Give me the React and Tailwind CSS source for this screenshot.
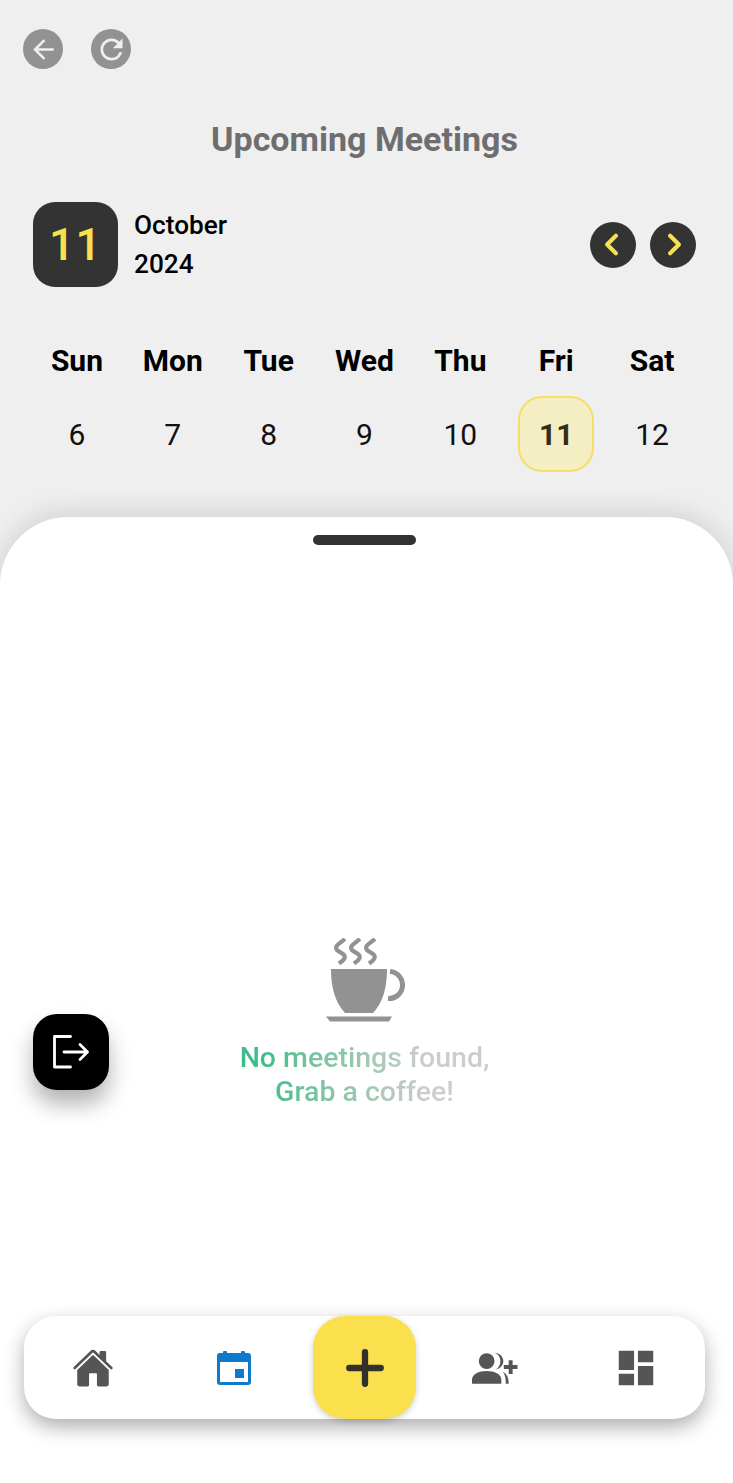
import { ChevronLeft, ChevronRight, Plus } from "lucide-react";
import { IoHome } from "react-icons/io5";
import { MdArrowBack, MdDashboard, MdRefresh } from "react-icons/md";

const days = [
    { name: "Sun", date: 6 },
    { name: "Mon", date: 7 },
    { name: "Tue", date: 8 },
    { name: "Wed", date: 9 },
    { name: "Thu", date: 10 },
    { name: "Fri", date: 11, active: true },
    { name: "Sat", date: 12 },
];

function CoffeeIcon() {
    return (
        <svg width="80" height="85" viewBox="0 0 80 85" fill="#929292">
            <path d="M6 31H62C62 50 58 64 48 75H20C10 64 6 50 6 31Z" />
            <path d="M65 33.5A13.5 13.5 0 0 1 63 60.5" fill="none" stroke="#929292" strokeWidth="5" />
            <path d="M1 78.5H67L64 83.6H5Z" />
            <g fill="none" stroke="#929292" strokeWidth="4.2">
                <path d="M20 1C14 6 9 8 12 12C15 15 22 16 19 21C18 23 16 24 14 25.500" />
                <path d="M35 1C29 6 24 8 27 12C30 15 37 16 34 21C33 23 31 24 29 25.500" />
                <path d="M50 1C44 6 39 8 42 12C45 15 52 16 49 21C48 23 46 24 44 25.500" />
            </g>
        </svg>
    );
}

function ExitIcon() {
    return (
        <svg width="40" height="36" viewBox="0 0 40 36" fill="none" stroke="white" strokeWidth="2.8" strokeLinecap="round" strokeLinejoin="round">
            <path d="M19.500 2.500H3.500V33H19.500" />
            <path d="M13 18H36.500M29 10.500L36.500 18L29 25.500" />
        </svg>
    );
}

function CalendarIcon() {
    return (
        <svg width="34" height="34" viewBox="0 0 34 34">
            <rect x="6" y="0" width="4" height="5" rx="1" fill="#0f7acb" />
            <rect x="24" y="0" width="4" height="5" rx="1" fill="#0f7acb" />
            <rect x="0" y="2" width="34" height="32" rx="3" fill="#0f7acb" />
            <rect x="3" y="11" width="28" height="20" fill="white" />
            <rect x="18" y="18" width="9" height="9" fill="#0f7acb" />
        </svg>
    );
}

function AddPersonIcon() {
    return (
        <svg width="47" height="34" viewBox="0 0 48 34" fill="#555555">
            <circle cx="16" cy="10" r="8" />
            <path d="M1 33V29C1 23 8 20 16 20C24 20 31 23 31 29V33Z" />
            <path d="M24 1.5C28 3 30 6 30 10C30 14 28 17 25 18.500C30 17.500 33 14 33 10C33 5.500 29 1.500 24 1.500Z" />
            <path d="M32 20.500C35 23 35.500 28 35.500 33H38.500C38.500 27 37 23 32 20.500Z" />
            <path d="M38.500 9H42.500V14H47.500V18H42.500V23H38.500V18H33.500V14H38.500Z" />
        </svg>
    );
}

export default function App() {
    return (
        <main className="min-h-screen bg-[#efefef] flex flex-col font-['Roboto',sans-serif] overflow-hidden">
            <section className="pt-[29px] pr-[4px]">
                <div className="flex gap-[28px] pl-[23px]">
                    <button className="w-10 h-10 rounded-full bg-[#929292] flex items-center justify-center text-[#efefef]">
                        <MdArrowBack size={31} />
                    </button>
                    <button className="w-10 h-10 rounded-full bg-[#929292] flex items-center justify-center text-[#efefef]">
                        <MdRefresh size={33} />
                    </button>
                </div>

                <h1 className="mt-[50px] text-center text-[34px] leading-10 font-bold text-[#6e6e6e]">
                    Upcoming Meetings
                </h1>

                <div className="mt-[43px] pl-[33px] pr-[33px] flex items-center">
                    <div className="w-[85px] h-[85px] pt-[1px] rounded-[22px] bg-[#333333] text-[#fae04c] text-[45px] font-medium flex items-center justify-center tracking-[1px]">
                        11
                    </div>
                    <div className="ml-4 text-[26.2px] font-medium leading-[39px] text-black">
                        <p>October</p>
                        <p>2024</p>
                    </div>
                    <div className="ml-auto flex gap-[14px]">
                        <button className="w-[46px] h-[46px] rounded-full bg-[#333333] flex items-center justify-center text-[#f6e054]">
                            <ChevronLeft size={35} strokeWidth={2.8} className="-ml-[3px]" />
                        </button>
                        <button className="w-[46px] h-[46px] rounded-full bg-[#333333] flex items-center justify-center text-[#f6e054]">
                            <ChevronRight size={35} strokeWidth={2.8} className="ml-[3px]" />
                        </button>
                    </div>
                </div>

                <div className="mt-[51px] mx-[29px] grid grid-cols-7">
                    {days.map((day) => (
                        <div key={day.name} className="flex flex-col items-center">
                            <p className="text-[30px] leading-[46px] font-bold text-black">{day.name}</p>
                            <div
                                className={`mt-[12px] w-[76px] h-[76px] flex items-center justify-center text-[30px] ${day.active
                                    ? "rounded-[24px] border-2 border-[#f5df68] bg-[#f4efc3] font-bold text-[#352d1c]"
                                    : "text-[#111111]"
                                    }`}
                            >
                                {day.date}
                            </div>
                        </div>
                    ))}
                </div>
            </section>

            <section className="relative mt-[45px] flex-1 flex flex-col bg-white rounded-t-[68px] shadow-[0_-4px_28px_rgba(0,0,0,0.13)]">
                <div className="mt-[18px] ml-[313px] w-[103px] h-[10px] rounded-full bg-[#333333]" />

                <div className="mt-[393px] pr-[4px] flex flex-col items-center">
                    <CoffeeIcon />
                    <p className="mt-[18px] w-[252px] text-center text-[28.5px] leading-[34px] font-medium bg-gradient-to-r from-[#3dbd8a] from-10% to-[#cdcdcd] to-75% bg-clip-text text-transparent">
                        No meetings found,
                        <br />
                        Grab a coffee!
                    </p>
                </div>

                <button className="absolute left-[33px] top-[497px] w-[76px] h-[76px] rounded-[24px] bg-black flex items-center justify-center shadow-[0_14px_22px_rgba(0,0,0,0.3)]">
                    <ExitIcon />
                </button>

                <nav className="mt-auto mb-[64px] ml-[24px] mr-[28px] h-[103px] rounded-[32px] bg-white shadow-[0_8px_20px_rgba(0,0,0,0.32)] flex items-center">
                    <div className="w-[289px] pl-[48px] pr-[62px] flex justify-between items-center">
                        <IoHome size={42} color="#555555" />
                        <CalendarIcon />
                    </div>
                    <button className="w-[103px] h-[103px] rounded-[32px] bg-[#fbe04d] flex items-center justify-center text-[#33302a] shadow-[0_2px_6px_rgba(0,0,0,0.2)]">
                        <Plus size={54} strokeWidth={2.8} />
                    </button>
                    <div className="flex-1 pl-[55px] pr-[46px] flex justify-between items-center">
                        <AddPersonIcon />
                        <MdDashboard size={46} color="#555555" />
                    </div>
                </nav>
            </section>
        </main>
    );
}
